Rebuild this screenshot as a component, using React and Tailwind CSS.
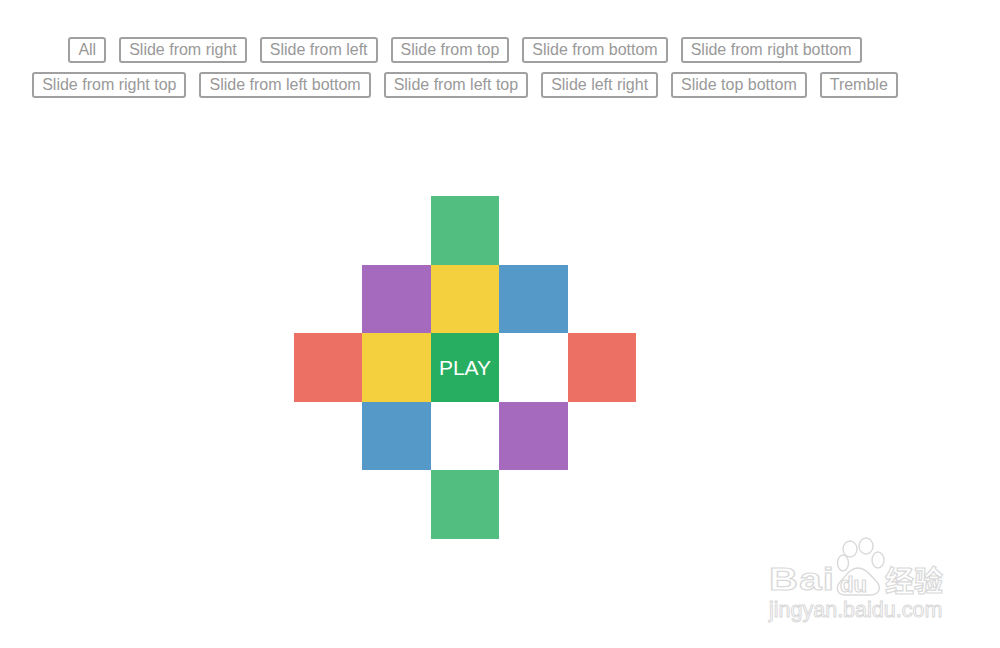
import React from "react";

const labels = [
  "All",
  "Slide from right",
  "Slide from left",
  "Slide from top",
  "Slide from bottom",
  "Slide from right bottom",
  "Slide from right top",
  "Slide from left bottom",
  "Slide from left top",
  "Slide left right",
  "Slide top bottom",
  "Tremble",
];

const G = "bg-[#52be80]";
const P = "bg-[#a569bd]";
const Y = "bg-[#f4d03f]";
const B = "bg-[#5499c7]";
const R = "bg-[#ec7063]";
const W = "bg-white";
const N = "";

const grid = [
  [N, N, G, N, N],
  [N, P, Y, B, N],
  [R, Y, "PLAY", W, R],
  [N, B, W, P, N],
  [N, N, G, N, N],
];

const stroke = "text-transparent [-webkit-text-stroke:1.2px_#d9d9d9]";

function Watermark() {
  return (
    <div className="absolute left-[769px] top-[536px] flex flex-col select-none pointer-events-none font-['Liberation_Sans',Arial,sans-serif]">
      <div className="flex items-end h-[60px]">
        <div className="w-[66px] pb-[4px]">
          <div className={`origin-left scale-x-[1.25] text-[32px] leading-[26px] font-bold tracking-[1px] ${stroke}`}>
            Bai
          </div>
        </div>
        <div className="relative w-[50px] h-[60px]">
          <svg width="50" height="60" viewBox="0 0 50 60" fill="none" stroke="#d9d9d9" strokeWidth="1.4">
            <ellipse cx="8" cy="27" rx="5.5" ry="8" />
            <ellipse cx="15" cy="13" rx="7" ry="8" />
            <ellipse cx="31" cy="10" rx="7" ry="8" />
            <ellipse cx="43" cy="24" rx="6" ry="8" />
            <path d="M23 32 C15 32 11 40 6 45 C1 50 0 59 11 59 L35 59 C46 59 46 50 41 45 C36 40 31 32 23 32 Z" />
          </svg>
          <div className={`absolute left-[5px] top-[38px] text-[22px] leading-none font-bold ${stroke}`}>
            du
          </div>
        </div>
        <div className={`text-[29px] leading-none font-bold pb-[2px] font-['Noto_Sans_CJK_SC',sans-serif] ${stroke}`}>
          经验
        </div>
      </div>
      <div className={`mt-[4px] text-[21.5px] leading-none ${stroke} [-webkit-text-stroke:1px_#d9d9d9]`}>
        jingyan.baidu.com
      </div>
    </div>
  );
}

export default function App() {
  return (
    <div className="relative w-[1000px] h-[648px] bg-white overflow-hidden font-['Liberation_Sans',Arial,sans-serif]">
      <div className="w-[930px] pt-[37px] flex flex-col items-center">
        <div className="flex flex-wrap justify-center gap-x-[13px] gap-y-[9px]">
          {labels.map((l) => (
            <button
              key={l}
              className="h-[26px] px-[8px] border-2 border-[#a0a0a0] rounded-[3px] text-[16px] leading-none text-[#999] bg-white"
            >
              {l}
            </button>
          ))}
        </div>
        <div className="mt-[98px] grid grid-cols-[repeat(5,68.6px)] grid-rows-[repeat(5,68.6px)]">
          {grid.flat().map((c, i) =>
            c === "PLAY" ? (
              <div
                key={i}
                className="bg-[#27ae60] flex items-center justify-center text-white text-[21px]"
              >
                PLAY
              </div>
            ) : (
              <div key={i} className={c} />
            )
          )}
        </div>
      </div>
      <Watermark />
    </div>
  );
}
